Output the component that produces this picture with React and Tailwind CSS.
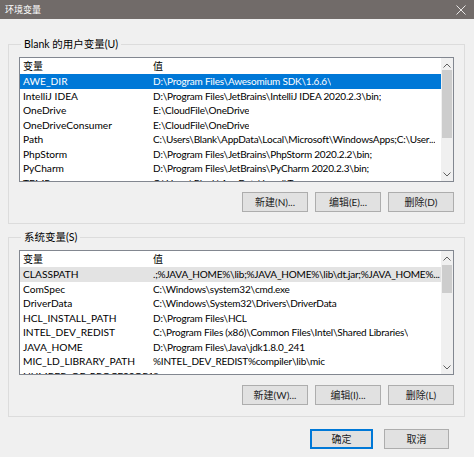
const font = { fontFamily: 'Lato, "Noto Sans CJK SC", sans-serif' };

const userVars = [
  ['AWE_DIR', 'D:\\Program Files\\Awesomium SDK\\1.6.6\\'],
  ['IntelliJ IDEA', 'D:\\Program Files\\JetBrains\\IntelliJ IDEA 2020.2.3\\bin;'],
  ['OneDrive', 'E:\\CloudFile\\OneDrive'],
  ['OneDriveConsumer', 'E:\\CloudFile\\OneDrive'],
  ['Path', 'C:\\Users\\Blank\\AppData\\Local\\Microsoft\\WindowsApps;C:\\User...'],
  ['PhpStorm', 'D:\\Program Files\\JetBrains\\PhpStorm 2020.2.2\\bin;'],
  ['PyCharm', 'D:\\Program Files\\JetBrains\\PyCharm 2020.2.3\\bin;'],
  ['TEMP', 'C:\\Users\\Blank\\AppData\\Local\\Temp'],
];

const sysVars = [
  ['CLASSPATH', '.;%JAVA_HOME%\\lib;%JAVA_HOME%\\lib\\dt.jar;%JAVA_HOME%...'],
  ['ComSpec', 'C:\\Windows\\system32\\cmd.exe'],
  ['DriverData', 'C:\\Windows\\System32\\Drivers\\DriverData'],
  ['HCL_INSTALL_PATH', 'D:\\Program Files\\HCL'],
  ['INTEL_DEV_REDIST', 'C:\\Program Files (x86)\\Common Files\\Intel\\Shared Libraries\\'],
  ['JAVA_HOME', 'D:\\Program Files\\Java\\jdk1.8.0_241'],
  ['MIC_LD_LIBRARY_PATH', '%INTEL_DEV_REDIST%compiler\\lib\\mic'],
  ['NUMBER_OF_PROCESSORS', '8'],
];

function Chevron({ up }) {
  return (
    <svg width="8" height="5" viewBox="0 0 8 5" className="text-[#606060]">
      <path d={up ? 'M0.5 4.5 L4 1 L7.5 4.5' : 'M0.5 0.5 L4 4 L7.5 0.5'} fill="none" stroke="currentColor" strokeWidth="1" />
    </svg>
  );
}

function ListView({ rows, selected, focused, thumbTop, thumbHeight }) {
  return (
    <div className="flex h-[125px] overflow-hidden border border-[#828790] bg-white">
      <div className="min-w-0 flex-1 overflow-hidden">
        <div className="flex h-[16px] items-center text-[10px] leading-[16px] text-black">
          <span className="w-[132px] shrink-0 pl-[3px]">变量</span>
          <span className="pl-[1px]">值</span>
        </div>
        {rows.map(([k, v], i) => (
          <div
            key={k}
            className={
              'flex h-[14.5px] items-center whitespace-nowrap text-[10.2px] leading-[14.5px] ' +
              (i === selected ? (focused ? 'bg-[#0078d7] text-white' : 'bg-[#e3e3e3] text-black') : 'text-black')
            }
          >
            <span className="w-[132px] shrink-0 overflow-hidden pl-[3px]">{k}</span>
            <span className="min-w-0 overflow-hidden pl-[1px] text-[10px] tracking-[-0.2px]">{v}</span>
          </div>
        ))}
      </div>
      <div className="relative w-[12px] shrink-0 bg-[#f0f0f0]">
        <div className="flex h-[12px] items-center justify-center pt-[2px]">
          <Chevron up />
        </div>
        <div className="absolute left-[1px] right-[1px] bg-[#cdcdcd]" style={{ top: thumbTop, height: thumbHeight }} />
        <div className="absolute bottom-[4px] left-0 right-0 flex justify-center">
          <Chevron />
        </div>
      </div>
    </div>
  );
}

function Btn({ children, primary, w = 'w-[66px]' }) {
  return (
    <div
      className={
        'flex h-[20px] items-center justify-center bg-[#e1e1e1] text-[10px] text-[#222] ' +
        w +
        (primary ? ' border-2 border-[#0078d7]' : ' border border-[#adadad]')
      }
    >
      {children}
    </div>
  );
}

function Group({ label, rows, selected, focused, thumbTop, thumbHeight, buttons }) {
  return (
    <fieldset className="ml-[8px] mr-[9px] min-w-0 border border-[#dcdcdc] px-[10px] pb-[11px] pt-[5px]">
      <legend className="ml-[2px] px-[3px] text-[10.5px] leading-[16px] text-black">{label}</legend>
      <ListView rows={rows} selected={selected} focused={focused} thumbTop={thumbTop} thumbHeight={thumbHeight} />
      <div className="mt-[10px] flex justify-end gap-[7px]">
        {buttons.map((b) => (
          <Btn key={b}>{b}</Btn>
        ))}
      </div>
    </fieldset>
  );
}

export default function App() {
  return (
    <div className="h-[457px] w-[474px] overflow-hidden bg-[#f0f0f0]" style={font}>
      <div className="flex h-[19px] items-center justify-between bg-[#716b69] pl-[5px] pr-[8px] text-[9px] text-white">
        <span>环境变量</span>
        <svg width="10" height="10" viewBox="0 0 10 10">
          <path d="M0.5 0.5 L9.5 9.5 M9.5 0.5 L0.5 9.5" stroke="#e8e6e5" strokeWidth="1" />
        </svg>
      </div>
      <div className="pt-[17px]">
        <Group
          label="Blank 的用户变量(U)"
          rows={userVars}
          selected={0}
          focused
          thumbTop={12}
          thumbHeight={68}
          buttons={['新建(N)...', '编辑(E)...', '删除(D)']}
        />
        <div className="h-[5px]" />
        <Group
          label="系统变量(S)"
          rows={sysVars}
          selected={0}
          focused={false}
          thumbTop={14}
          thumbHeight={28}
          buttons={['新建(W)...', '编辑(I)...', '删除(L)']}
        />
        <div className="mt-[12px] flex justify-end gap-[11px] pr-[25px]">
          <Btn primary w="w-[63px]">确定</Btn>
          <Btn w="w-[65px]">取消</Btn>
        </div>
      </div>
    </div>
  );
}
